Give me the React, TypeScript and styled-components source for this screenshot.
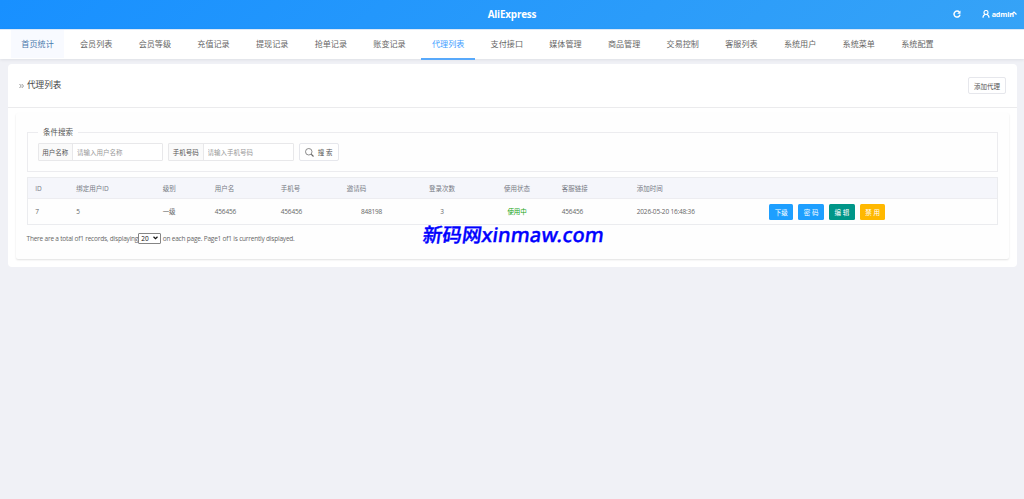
import React from "react";
import styled, { createGlobalStyle } from "styled-components";

const Global = createGlobalStyle`
  * { box-sizing: border-box; }
  html, body { margin: 0; background: #f0f1f6; }
  body {
    font-family: "Open Sans", "Noto Sans CJK SC", sans-serif;
    font-size: 6.5px;
    color: #666;
    min-height: 499px;
    overflow: hidden;
  }
  button, input, select { font-family: inherit; margin: 0; }
`;

const Header = styled.header`
  display: grid;
  grid-template-columns: 1fr auto 1fr;
  align-items: center;
  height: 29px;
  background: linear-gradient(135deg, #1890ff, #36a3f7);
  color: #fff;
`;
const Brand = styled.h1`
  grid-column: 2;
  margin: 0;
  font-size: 9.9px;
  line-height: 29px;
  font-weight: 700;
  letter-spacing: -0.18px;
`;
const HeaderTools = styled.div`
  display: flex;
  justify-content: flex-end;
  align-items: center;
  padding-right: 7px;
  height: 29px;
  padding-bottom: 2px;
`;
const UserMenu = styled.div`
  display: flex;
  align-items: center;
  margin-left: 21px;
  font-size: 7.2px;
  font-weight: 700;
  line-height: 10px;
  letter-spacing: -0.1px;
  svg:first-child { margin-right: 2px; }
  svg:last-child { margin-left: -3px; }
`;

const Nav = styled.nav`
  display: flex;
  gap: 5.37px;
  height: 30px;
  padding-left: 10.9px;
  background: #fff;
  border-top: 1px solid #dce9f8;
  box-shadow: 0 1px 3px rgba(0, 21, 41, 0.08);
`;
const NavItem = styled.a<{ $state?: "home" | "active" }>`
  flex: 0 0 53.3px;
  text-align: center;
  font-size: 8.1px;
  line-height: 27px;
  white-space: nowrap;
  color: ${(p) => (p.$state === "active" ? "#409eff" : p.$state === "home" ? "#4b79ad" : "#666")};
  background: ${(p) => (p.$state === "home" ? "#f8faff" : "transparent")};
  border-bottom: 2px solid ${(p) => (p.$state === "active" ? "#58a9fb" : "transparent")};
  height: ${(p) => (p.$state === "active" ? "30px" : "28px")};
`;

const Page = styled.main`
  margin: 5px 7.5px 0 8px;
  height: 203px;
  background: #fff;
  border-radius: 4px;
`;
const PageHead = styled.div`
  display: flex;
  align-items: center;
  justify-content: space-between;
  height: 44px;
  padding: 0 10.5px;
  border-bottom: 1px solid #ebebed;
`;
const Title = styled.h2`
  display: flex;
  align-items: center;
  margin: 0 0 2px;
  font-size: 8.6px;
  font-weight: 400;
  color: #444;
  svg { margin: 2px 3px 0 0.5px; }
`;
const OutlineButton = styled.button<{ $w: number; $h: number }>`
  display: flex;
  align-items: center;
  justify-content: center;
  gap: 4px;
  width: ${(p) => p.$w}px;
  height: ${(p) => p.$h}px;
  padding: 0;
  border: 1px solid #e6e7ec;
  border-radius: 2px;
  background: #fff;
  color: #555;
  font-size: 6.5px;
  white-space: nowrap;
`;

const Panel = styled.section`
  margin: 5px 8px 0;
  height: 146px;
  padding: 13px 10.5px 0;
  background: #fefefe;
  border-radius: 2px;
  box-shadow: 0 1px 2px rgba(0, 0, 0, 0.12);
`;
const Search = styled.fieldset`
  height: 46px;
  margin: 0;
  min-width: 0;
  padding: 5px 10px 0;
  border: 1px solid #ececef;
  legend {
    padding: 0 5px 0 5.5px;
    font-size: 7.5px;
    line-height: 12px;
    color: #555;
  }
`;
const Fields = styled.div`
  display: flex;
  gap: 5px;
`;
const Field = styled.label`
  display: flex;
  width: 125.6px;
  height: 18px;
  border: 1px solid #e8e8ea;
  border-radius: 1px;
  background: #fff;
  span {
    flex: 0 0 34.5px;
    text-align: center;
    line-height: 17px;
    color: #555;
    background: #fafafa;
    border-right: 1px solid #e8e8ea;
  }
  input {
    flex: 1;
    min-width: 0;
    border: 0;
    padding: 0 4px;
    background: transparent;
    font-size: 6.5px;
  }
  input::placeholder { color: #999; }
`;

const Table = styled.table`
  width: 100%;
  height: 48px;
  margin-top: 5px;
  table-layout: fixed;
  border-collapse: separate;
  border-spacing: 0;
  border: 1px solid #ebecef;
`;
const Cell = styled.td<{ $center?: boolean }>`
  padding: 0 0 0 ${(p) => (p.$center ? 0 : 7.8)}px;
  text-align: ${(p) => (p.$center ? "center" : "left")};
  font-weight: 400;
  letter-spacing: -0.18px;
  line-height: 9px;
  white-space: nowrap;
`;
const HeadRow = styled.tr`
  height: 21px;
  ${Cell} {
    padding-top: 1px;
    background: #f5f6fb;
    color: #777b84;
    border-bottom: 1px solid #ededf1;
    letter-spacing: 0;
  }
`;
const BodyRow = styled.tr`
  height: 25px;
`;
const Status = styled.span`
  color: #19a519;
`;
const Actions = styled.div`
  display: flex;
  gap: 5px;
`;
const Action = styled.button<{ $color: string; $w: number }>`
  width: ${(p) => p.$w}px;
  height: 16px;
  padding: 0;
  border: 0;
  border-radius: 1.5px;
  background: ${(p) => p.$color};
  color: #fff;
  font-size: 6.5px;
  line-height: 17px;
`;

const Pager = styled.div`
  display: flex;
  align-items: center;
  height: 12px;
  margin-top: 7px;
  white-space: pre;
  letter-spacing: -0.2px;
`;
const PageSize = styled.span`
  display: flex;
  align-items: center;
  justify-content: space-between;
  width: 22.5px;
  height: 11px;
  margin-right: 2px;
  padding: 0 2px;
  border: 1px solid #858585;
  border-radius: 1px;
  background: #fff;
  color: #111;
  letter-spacing: 0;
`;
const Watermark = styled.div`
  position: absolute;
  left: 423px;
  top: 220px;
  display: flex;
  align-items: baseline;
  font: 500 19.6px/28px "Noto Sans CJK SC", sans-serif;
  -webkit-text-stroke: 0.4px #0000fe;
  color: #0000fe;
  white-space: nowrap;
  transform: skewX(-8deg);
  span {
    font-family: "Noto Sans", sans-serif;
    font-weight: 500;
    font-size: 20px;
    letter-spacing: 0.15px;
  }
`;

const nav = ["首页统计", "会员列表", "会员等级", "充值记录", "提现记录", "抢单记录", "账变记录", "代理列表", "支付接口", "媒体管理", "商品管理", "交易控制", "客服列表", "系统用户", "系统菜单", "系统配置"];

const columns: { head: string; value: React.ReactNode; w?: number; center?: boolean; headLeft?: boolean }[] = [
  { head: "ID", value: "7", w: 41 },
  { head: "绑定用户ID", value: "5", w: 86.5 },
  { head: "级别", value: "一级", w: 52 },
  { head: "用户名", value: "456456", w: 66 },
  { head: "手机号", value: "456456", w: 66 },
  { head: "邀请码", value: "848198", w: 65, center: true, headLeft: true },
  { head: "登录次数", value: "3", w: 76, center: true },
  { head: "使用状态", value: <Status>使用中</Status>, w: 74, center: true },
  { head: "客服链接", value: "456456", w: 75 },
  { head: "添加时间", value: "2026-05-20 16:48:36", w: 132.5 },
  {
    head: "",
    value: (
      <Actions>
        <Action $color="#1e9fff" $w={24}>下级</Action>
        <Action $color="#1e9fff" $w={25.5}>密 码</Action>
        <Action $color="#009688" $w={26}>编 辑</Action>
        <Action $color="#ffb800" $w={25.5}>禁 用</Action>
      </Actions>
    ),
  },
];

export default function App() {
  return (
    <>
      <Global />
      <Header>
        <Brand>AliExpress</Brand>
        <HeaderTools>
          <svg width="8" height="8" viewBox="0 0 16 16" fill="none" stroke="#fff" strokeWidth="3">
            <path d="M12.6 4.2A6 6 0 1 0 14 9.3" />
            <path d="M15 1v6.6H8.4z" fill="#fff" stroke="none" />
          </svg>
          <UserMenu>
            <svg width="8" height="8" viewBox="0 0 16 16" fill="none" stroke="#fff" strokeWidth="2.3">
              <circle cx="8" cy="5" r="4" />
              <path d="M2 15.5c0-3.5 2-5.8 4.5-6.4M14 15.5c0-3.5-2-5.8-4.5-6.4" />
            </svg>
            admin
            <svg width="6" height="5" viewBox="0 0 12 10" fill="none" stroke="#fff" strokeWidth="2.4">
              <path d="M1 7l5-5 5 5" />
            </svg>
          </UserMenu>
        </HeaderTools>
      </Header>
      <Nav>
        {nav.map((n, i) => (
          <NavItem key={n} $state={i === 0 ? "home" : i === 7 ? "active" : undefined}>{n}</NavItem>
        ))}
      </Nav>
      <Page>
        <PageHead>
          <Title>
            <svg width="5" height="6" viewBox="0 0 10 12" fill="none" stroke="#777" strokeWidth="1.5">
              <path d="M1 2l3.5 4L1 10M5.5 2L9 6l-3.5 4" />
            </svg>
            代理列表
          </Title>
          <OutlineButton $w={38} $h={17}>添加代理</OutlineButton>
        </PageHead>
        <Panel>
          <Search>
            <legend>条件搜索</legend>
            <Fields>
              <Field><span>用户名称</span><input placeholder="请输入用户名称" /></Field>
              <Field><span>手机号码</span><input placeholder="请输入手机号码" /></Field>
              <OutlineButton $w={40} $h={18}>
                <svg width="9" height="9" viewBox="0 0 18 18" fill="none" stroke="#666" strokeWidth="1.5">
                  <circle cx="7.5" cy="7.5" r="6.5" />
                  <path d="M12.5 12.5L17 17" strokeWidth="2.2" />
                </svg>
                搜 索
              </OutlineButton>
            </Fields>
          </Search>
          <Table>
            <colgroup>
              {columns.map((c, i) => <col key={i} width={c.w} />)}
            </colgroup>
            <thead>
              <HeadRow>
                {columns.map((c, i) => <Cell as="th" key={i} $center={c.center && !c.headLeft}>{c.head}</Cell>)}
              </HeadRow>
            </thead>
            <tbody>
              <BodyRow>
                {columns.map((c, i) => <Cell key={i} $center={c.center}>{c.value}</Cell>)}
              </BodyRow>
            </tbody>
          </Table>
          <Pager>
            <span>There are a total of1 records, displaying</span>
            <PageSize>
              20
              <svg width="5" height="4" viewBox="0 0 10 8" fill="none" stroke="#111" strokeWidth="2.4">
                <path d="M1 1.5l4 4 4-4" />
              </svg>
            </PageSize>
            <span>on each page. Page1 of1 is currently displayed.</span>
          </Pager>
        </Panel>
      </Page>
      <Watermark>新码网<span>xinmaw.com</span></Watermark>
    </>
  );
}
